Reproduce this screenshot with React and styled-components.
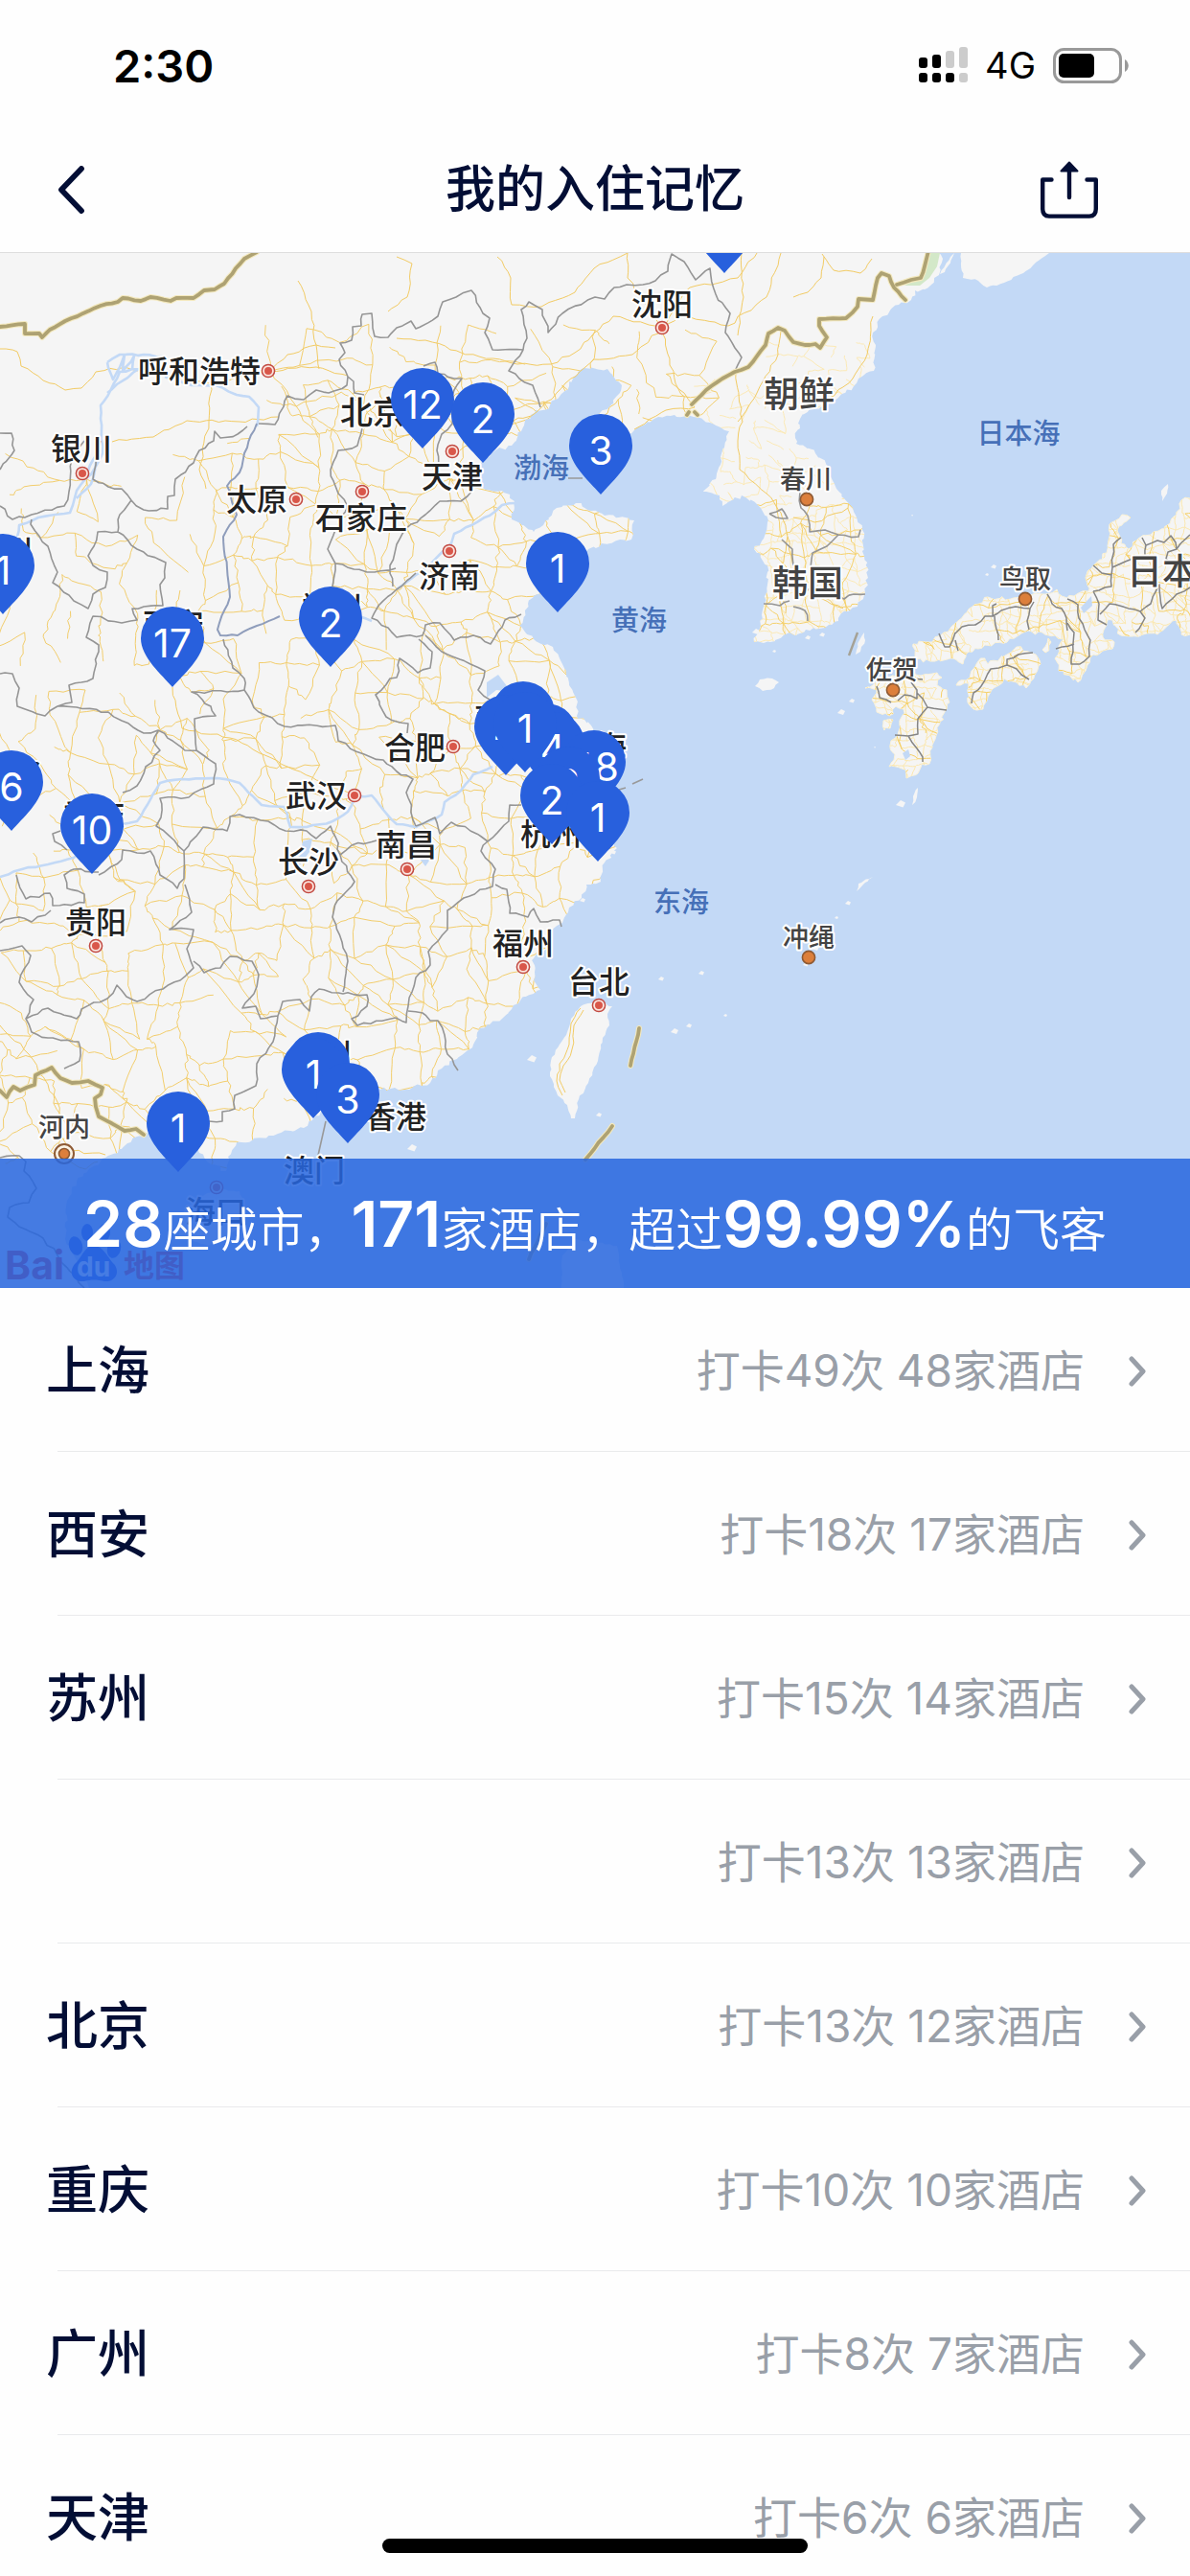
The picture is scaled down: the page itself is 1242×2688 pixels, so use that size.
import React from "react";
import styled, { createGlobalStyle } from "styled-components";

const cities = [
  { name: "上海", visits: 49, hotels: 48 },
  { name: "西安", visits: 18, hotels: 17 },
  { name: "苏州", visits: 15, hotels: 14 },
  { name: "", visits: 13, hotels: 13 },
  { name: "北京", visits: 13, hotels: 12 },
  { name: "重庆", visits: 10, hotels: 10 },
  { name: "广州", visits: 8, hotels: 7 },
  { name: "天津", visits: 6, hotels: 6 },
];

// later pins cover earlier ones, x/y is the tip
const pins = [
  { x: 756, y: 285, count: 1 },
  { x: 441, y: 468, count: 12 },
  { x: 504, y: 483, count: 2 },
  { x: 627, y: 516, count: 3 },
  { x: 582, y: 639, count: 1 },
  { x: 3, y: 641, count: 1 },
  { x: 345, y: 696, count: 2 },
  { x: 180, y: 717, count: 17 },
  { x: 12, y: 867, count: 6 },
  { x: 96, y: 912, count: 10 },
  { x: 546, y: 795, count: 1 },
  { x: 570, y: 818, count: 1 },
  { x: 528, y: 809, count: 4 },
  { x: 577, y: 827, count: 4 },
  { x: 548, y: 806, count: 1 },
  { x: 620, y: 846, count: 48 },
  { x: 593, y: 863, count: 2 },
  { x: 576, y: 881, count: 2 },
  { x: 624, y: 899, count: 1 },
  { x: 332, y: 1161, count: 1 },
  { x: 327, y: 1167, count: 1 },
  { x: 363, y: 1193, count: 3 },
  { x: 186, y: 1223, count: 1 },
];

const labels = [
  ["呼和浩特", 208, 387, "city"],
  ["银川", 85, 468, "city"],
  ["太原", 268, 521, "city"],
  ["石家庄", 377, 540, "city"],
  ["北京", 389, 430, "capital"],
  ["沈阳", 691, 317, "city"],
  ["天津", 472, 497, "city"],
  ["济南", 469, 601, "city"],
  ["西安", 181, 651, "city"],
  ["郑州", 346, 634, "city"],
  ["兰州", 2, 575, "city"],
  ["合肥", 433, 780, "city"],
  ["武汉", 330, 830, "city"],
  ["长沙", 322, 899, "city"],
  ["南昌", 424, 881, "city"],
  ["贵阳", 100, 962, "city"],
  ["成都", 10, 808, "city"],
  ["重庆", 98, 850, "city"],
  ["南京", 527, 749, "city"],
  ["上海", 622, 779, "city"],
  ["杭州", 575, 870, "city"],
  ["福州", 546, 984, "city"],
  ["台北", 625, 1024, "city"],
  ["广州", 335, 1100, "city"],
  ["香港", 413, 1165, "city"],
  ["澳门", 328, 1221, "city"],
  ["海口", 225, 1264, "city"],
  ["河内", 67, 1176, "town"],
  ["春川", 841, 500, "town"],
  ["鸟取", 1070, 604, "town"],
  ["佐贺", 931, 699, "town"],
  ["冲绳", 844, 978, "town"],
  ["朝鲜", 834, 411, "country"],
  ["韩国", 843, 608, "country"],
  ["日本", 1213, 596, "country"],
  ["渤海", 565, 488, "sea"],
  ["黄海", 667, 647, "sea"],
  ["东海", 711, 941, "sea"],
  ["日本海", 1063, 452, "sea"],
];

const redDots =
  "280,387 86,494 309,521 378,513 691,342 472,471 469,575 473,779 370,830 322,925 425,907 100,987 546,1009 625,1049 226,1239";
const orangeDots = "842,521 1070,625 932,720 844,999";

const mainland =
  "-20,240 975,240 980,264 984,270 980,287 965,302 955,303 951,313 938,318 921,330 911,347 914,360 912,387 896,395 891,403 875,415 861,423 845,427 835,437 835,447 830,457 831,463 851,473 865,487 873,510 890,530 900,553 902,580 906,603 903,620 895,633 878,640 875,648 861,655 841,657 831,663 824,660 804,670 787,670 794,653 797,633 801,610 801,590 787,573 797,562 802,543 791,527 774,517 754,528 751,517 734,513 747,500 752,477 761,450 744,442 724,435 704,433 687,435 661,450 647,460 627,482 614,470 612,440 634,427 647,410 649,402 634,385 607,385 594,403 574,423 554,433 544,450 534,465 517,470 504,480 497,495 504,509 524,512 537,523 534,542 557,555 567,548 581,530 601,525 617,533 631,538 662,543 659,563 647,563 614,573 590,595 561,620 551,630 542,653 557,667 577,675 587,693 594,715 602,730 602,747 617,757 625,775 612,800 640,815 645,830 634,873 644,885 631,900 627,920 612,923 607,937 594,947 587,963 574,973 571,990 557,1000 557,1023 564,1033 547,1040 534,1053 524,1063 501,1073 494,1090 477,1105 457,1117 449,1130 424,1137 412,1135 397,1137 375,1140 350,1165 335,1160 317,1177 290,1183 263,1190 247,1192 238,1207 236,1222 217,1213 208,1203 205,1185 180,1190 152,1182 133,1193 123,1203 110,1208 80,1233 70,1253 68,1293 80,1315 100,1360 -20,1360";

const islands = [
  "606,1050 621,1045 639,1050 634,1058 636,1070 629,1083 624,1107 614,1130 604,1147 600,1167 596,1167 592,1153 582,1143 574,1123 576,1103 591,1080 596,1063",
  "1003,250 1003,264 1005,290 1021,293 1030,300 1048,295 1068,285 1078,277 1095,264 1095,250",
  "213,1247 227,1240 250,1243 255,1253 247,1283 217,1300 187,1290 187,1267",
  "587,1310 600,1293 644,1300 651,1344 651,1360 585,1360",
  "1219,505 1218,515 1213,523 1212,512",
  "902,660 897,668 893,683 898,680 903,668",
  "958,822 957,832 952,840 953,831",
  "911,915 903,921 894,930 896,922",
  "788,716 793,709 806,708 813,712 808,718 796,721",
  "992,268 996,264 986,284 981,286",
];

const japan = [
  "1260,515 1242,520 1233,522 1228,537 1215,552 1188,562 1178,573 1170,567 1166,553 1180,540 1171,537 1158,547 1158,560 1155,577 1141,590 1133,603 1136,617 1121,622 1111,623 1103,615 1091,620 1078,620 1055,625 1031,623 1015,633 1001,647 985,660 968,670 953,672 955,688 971,690 995,687 1005,693 1011,680 1028,673 1051,670 1068,660 1088,660 1101,663 1110,667 1101,687 1105,700 1125,712 1133,700 1141,683 1161,677 1163,670 1151,665 1155,650 1161,647 1170,663 1208,662 1228,647 1233,662 1260,660",
  "1008,710 1021,690 1028,687 1031,693 1051,683 1061,675 1081,683 1086,693 1071,718 1061,712 1048,708 1035,720 1026,740 1016,740 1010,733 1011,713 998,715",
  "928,707 955,703 961,705 978,702 983,707 978,715 988,720 991,733 988,740 981,753 973,780 970,797 961,797 958,807 946,812 945,803 928,800 933,793 930,773 938,763 943,740 935,737 928,747 915,743 910,730 915,720 903,718 911,715",
  "1088,678 1094,666 1097,670 1091,681",
  "922,752 932,751 929,760 923,762",
];

const islets = [
  [690, 1022, 3],
  [732, 1016, 3],
  [704, 1077, 4],
  [719, 1071, 3],
  [757, 1060, 2],
  [555, 1106, 5],
  [625, 1164, 3],
  [430, 1199, 5],
  [952, 538, 1],
  [1037, 592, 3],
  [1030, 600, 2],
  [940, 840, 5],
  [878, 744, 4],
  [889, 732, 3],
  [885, 943, 3],
  [873, 958, 2],
  [851, 990, 4],
  [841, 1007, 3],
  [789, 660, 4],
  [808, 680, 2],
  [843, 666, 3],
  [858, 663, 3],
  [608, 940, 3],
  [640, 890, 3],
  [913, 780, 1],
];

const provinces = [
  "380,412 370,410 369,398 363,393 354,375 360,368 355,358 367,355 368,341 377,340 378,328 388,327 391,351 405,352 414,342 429,335 434,343 457,330 462,315 476,310 492,303 504,327 511,332 506,347 514,365 546,365 550,353 544,323 552,315 566,323 572,347 587,327 621,310 631,312 641,300 654,297 671,297 684,293 697,283 701,265 714,273 726,292 741,280 747,307 762,327 757,347 767,363 774,373 768,385",
  "546,365 531,387 542,395 556,402 564,425",
  "363,393 362,402 343,410 330,407 317,417 300,413 287,443 270,442",
  "258,445 248,453 230,457 224,450 223,460 208,470 202,483 183,500 182,517 175,518 175,531 150,532 137,522 127,510 113,508 97,500 100,485 105,460",
  "137,522 125,537 123,555 102,555 98,570 92,580 97,590 112,597 110,613 97,620 92,635 77,627 55,608 60,597 50,570 32,547 33,542",
  "123,555 143,573 173,587 172,603 167,610 170,632 138,635 143,647 127,650 97,643 90,665 103,673 97,708 72,715 75,733 60,737 47,747 18,737 20,718 13,703 0,703",
  "0,528 13,542 33,537 67,528 72,513 75,480 88,460",
  "0,452 12,452 15,470 0,490",
  "378,447 373,465 353,470 345,490 350,507 362,527 350,553 342,573 350,588 347,612",
  "350,588 383,597 413,593",
  "492,513 481,523 459,523 444,537 429,547 414,568 407,590 410,612",
  "434,598 414,615 395,632 388,645 405,655 414,665 441,663 444,652 459,650 474,668 494,663 512,672 527,647 544,641",
  "444,663 461,680 491,693 506,700 499,720 511,730",
  "437,667 451,680 449,697 436,702 417,687 414,707 407,708 392,725 403,748 414,753 426,755 425,765",
  "233,667 243,697 255,708 255,720 270,743 297,758 350,757 353,773 380,787 400,793 414,805 431,813 424,827 434,862",
  "255,720 237,722 200,722 220,737 225,747 203,750 205,783 225,797 223,818 197,832 167,833 168,853 163,862 182,877 192,888 212,863 237,867 240,852 250,850 280,857 298,867 320,867 330,875 345,862 350,873 355,892 370,920 352,940 347,957 357,983 363,1003 358,1035",
  "60,737 80,738 113,743 127,752 150,765 165,762 193,783 205,783",
  "165,763 160,773 167,783 152,800 143,820 128,827",
  "63,867 55,870 57,878 70,887",
  "103,910 77,907 67,913 70,927 88,933 88,942 55,945 52,932 27,938 17,913",
  "103,913 127,897 128,887 143,890 157,888 167,913 185,927 192,917 192,888",
  "193,923 200,952 177,970 202,970 195,990 202,1010 188,1023 170,1032 143,1045 132,1040 122,1028 112,1042 85,1053 80,1063 50,1052 27,1063 33,1077 50,1083 82,1087 83,1107 67,1115",
  "27,1063 35,1043 20,1025 32,997 23,987 0,992",
  "53,950 33,962 20,957 0,963",
  "202,1003 213,1015 230,1010 240,998 263,1003 270,1017 265,1037 253,1052 267,1050 272,1063 290,1060 295,1045 313,1043 323,1055 325,1040 333,1032 358,1037 383,1038 383,1050 367,1063 373,1070 413,1062 424,1067 426,1050 434,1020 449,1007 447,993 467,970 467,950 484,937 514,925 517,907 502,888 509,878 491,867 471,858 459,870 454,853 434,862",
  "517,923 529,928 532,953 551,957 557,948 564,962 584,960 586,967",
  "509,878 531,857 532,840 544,840",
  "426,1055 441,1057 449,1065 457,1065 464,1080 467,1100 478,1117",
  "290,1060 285,1087 268,1110 267,1133 245,1143 245,1157 232,1160 232,1170 218,1170",
  "355,892 367,882 393,877",
  "442,382 454,378 457,390 474,395 482,395 474,407 472,442 461,453 456,470 457,490",
  "835,513 836,530 843,538 845,555 861,553 875,558 896,560 898,553",
  "875,558 863,570 848,577 846,593 848,613 832,620",
  "848,613 865,618 881,625 891,620 903,620",
  "803,536 816,531 822,541 810,540 803,536",
  "816,563 827,573 828,590",
  "828,633 840,637 843,648",
  "797,630 814,632 824,627",
  "0,1208 20,1206 27,1212 25,1222 38,1240 30,1255 10,1260 8,1270 20,1280 45,1292 60,1310 88,1344",
];

const prefectures = [
  "1170,561 1162,568 1161,592",
  "1141,590 1150,598 1160,600 1161,592 1170,588 1182,583",
  "1192,561 1196,569 1195,580 1187,584",
  "1196,569 1208,564 1215,566 1222,559 1227,566 1228,573 1242,558",
  "1228,573 1219,576 1217,583 1228,590 1242,600",
  "1160,600 1160,612 1147,616 1141,617",
  "1141,617 1147,630 1146,647 1155,652",
  "1148,641 1158,630 1172,633 1190,638 1201,630 1210,610 1213,635 1228,620 1242,613",
  "1190,638 1195,645 1185,660",
  "997,661 1004,654 1018,652 1028,643 1036,643 1036,632 1040,630",
  "1036,643 1045,637 1060,633 1075,635 1079,628",
  "1038,643 1042,668",
  "1075,635 1072,648 1074,657",
  "1093,620 1098,630 1108,635 1113,645 1114,658",
  "1114,625 1125,631 1126,645 1132,657 1138,668 1137,685 1127,693 1118,693 1120,680 1121,660 1114,650",
  "980,661 986,675 991,675 997,660",
  "997,668 1000,679",
  "1102,677 1121,672",
  "1014,734 1016,723 1024,716 1034,698 1051,694 1051,688 1063,683 1078,681",
  "1051,694 1061,698 1066,704 1074,709",
  "915,716 918,728 930,733",
  "937,731 944,725 957,729 957,720 951,712",
  "957,723 963,729 968,738 958,750 958,766 948,768 934,767",
  "968,738 980,740 988,741",
  "948,768 957,781 963,790 963,795",
  "952,708 963,709",
];

const borders = [
  "0,341 26,338 26,348 41,348 44,352 52,344 68,335 105,319 123,315 128,311 147,314 157,310 178,314 184,311 202,311 213,303 224,302 234,296 246,280 255,270 268,263",
  "722,422 737,407 754,395 767,388 781,383 789,373 799,360 802,348 812,342 819,345 828,357 840,360 851,359 856,363 863,352 855,340 855,333 883,332 895,320 896,312 911,313 916,290 920,285 928,288 933,300 945,313",
  "936,297 951,292 961,290 965,278 969,262",
  "0,1138 7,1145 14,1134 21,1138 36,1132 37,1122 54,1114 63,1125 75,1130 92,1128 107,1135 105,1142 99,1146 100,1155 103,1165 130,1180 142,1178 150,1184",
  "667,1073 658,1112",
  "639,1175 611,1210",
  "570,1277 552,1314",
  "717,433 719,430",
  "725,430 728,433",
];

const rivers = [
  "0,915 23,907 50,902 77,895 96,880 128,860 143,857 167,817 190,813 227,812 250,817 273,840 297,842 303,863 320,863 347,857 363,847 370,832 388,830 400,845 414,860 434,863 461,850 464,837 481,825 494,808 514,800",
  "18,560 20,548 40,540 73,535 80,512 95,495 107,473 105,423 115,408 125,388 145,385",
  "112,378 125,370 150,370 170,372 145,385 112,410",
  "112,378 118,396 130,370 128,388 140,371 138,386",
  "172,393 200,402 225,402 247,412 260,414 270,425 268,445",
  "537,525 524,527 511,538 474,557 471,567 451,587 434,600 414,615",
  "88,500 97,480 103,470 95,505 80,520",
  "388,648 370,640 354,650",
];

const borderRiver =
  "268,442 255,473 250,493 237,507 247,537 233,560 237,593 240,623 227,657 230,663 248,663 268,653 292,643";

const highways = [
  "0,364 18,367 22,382 45,397 68,407 85,405 100,388 130,383 220,400 280,387 330,383 363,392",
  "311,293 325,325 330,360 333,385",
  "280,387 300,370 330,360 350,363",
  "117,461 160,456 195,439 250,440 290,435",
  "220,400 218,440 208,490 215,510",
  "414,353 444,355 470,365 500,372 540,380 575,380 600,368 640,330 691,342",
  "414,268 430,275 425,310 405,325",
  "519,268 533,290 534,318 565,320 600,305 620,280 655,264",
  "691,342 660,370 620,375 590,400 560,430 520,445 480,470",
  "691,342 715,330 760,340 800,310 815,264",
  "691,342 705,400 725,425 695,428 662,448",
  "655,264 655,290 691,342",
  "691,342 720,300 770,290 790,264",
  "774,264 776,310 770,350",
  "768,388 775,440 770,460 772,490 800,515 815,535 822,560",
  "815,345 812,370 790,410 770,440",
  "911,330 905,370 890,395 860,420",
  "828,540 850,545 885,530",
  "822,560 830,600 850,620 880,635",
  "822,560 815,600 820,640",
  "606,1052 596,1068 594,1090 584,1110 581,1128 587,1143",
  "609,1054 599,1070 597,1095 588,1112 584,1127 590,1140",
  "860,268 857,290 843,305 828,310",
  "910,270 898,285 870,282 858,265",
  "180,717 190,760 240,770 300,800 370,830",
  "0,1070 30,1100 60,1150 68,1200 110,1205",
];

const sketch = (seed) => {
  let s = seed;
  return () => {
    s = (s * 16807) % 2147483647;
    return s / 2147483647;
  };
};

const parse = (str) => str.split(" ").map((p) => p.split(",").map(Number));

// splits every segment and nudges the new points, for a natural coast line
const rough = (str, amp, closed, step = 7) => {
  const pts = parse(str);
  const rand = sketch(pts.length * 911 + Math.abs(pts[0][0]) + 7);
  const out = [];
  const end = closed ? pts.length : pts.length - 1;
  for (let i = 0; i < end; i++) {
    const [x1, y1] = pts[i];
    const [x2, y2] = pts[(i + 1) % pts.length];
    const n = Math.max(1, Math.round(Math.hypot(x2 - x1, y2 - y1) / step));
    for (let k = 0; k < n; k++) {
      const j = k === 0 ? 0 : amp;
      out.push([
        x1 + ((x2 - x1) * k) / n + (rand() - 0.5) * j,
        y1 + ((y2 - y1) * k) / n + (rand() - 0.5) * j,
      ]);
    }
  }
  if (!closed) out.push(pts[pts.length - 1]);
  return (
    "M" +
    out.map(([x, y]) => `${x.toFixed(1)} ${y.toFixed(1)}`).join("L") +
    (closed ? "Z" : "")
  );
};

const roadMesh = (x0, y0, x1, y1, gap, seed, chance) => {
  const rand = sketch(seed);
  const cols = Math.ceil((x1 - x0) / gap);
  const rows = Math.ceil((y1 - y0) / gap);
  const node = [];
  for (let r = 0; r <= rows; r++) {
    node.push([]);
    for (let c = 0; c <= cols; c++) {
      node[r].push([
        x0 + (c + (rand() - 0.5) * 0.8) * gap,
        y0 + (r + (rand() - 0.5) * 0.8) * gap,
      ]);
    }
  }
  let d = "";
  const link = (a, b) => {
    if (!b || rand() > chance(a[0], a[1])) return;
    d += `M${a[0].toFixed(1)} ${a[1].toFixed(1)}`;
    for (let k = 1; k < 5; k++) {
      const x = a[0] + ((b[0] - a[0]) * k) / 5 + (rand() - 0.5) * gap * 0.14;
      const y = a[1] + ((b[1] - a[1]) * k) / 5 + (rand() - 0.5) * gap * 0.14;
      d += `L${x.toFixed(1)} ${y.toFixed(1)}`;
    }
    d += `L${b[0].toFixed(1)} ${b[1].toFixed(1)}`;
  };
  for (let r = 0; r <= rows; r++) {
    for (let c = 0; c <= cols; c++) {
      link(node[r][c], node[r][c + 1]);
      link(node[r][c], node[r + 1] && node[r + 1][c]);
      if (rand() > 0.7) link(node[r][c], node[r + 1] && node[r + 1][c + 1]);
    }
  }
  return d;
};

const chinaRoads = roadMesh(0, 400, 660, 1200, 27, 77, (x, y) => {
  if (y < 460 && x < 290) return 0;
  if (x < 210 && y < 740) return 0.38;
  if (x < 60 && y < 900) return 0.4;
  return x > 330 ? 0.84 : 0.7;
});
const northRoads = roadMesh(290, 350, 720, 440, 32, 31, () => 0.6);
const koreaRoads = roadMesh(725, 360, 930, 670, 13, 5, (x, y) => {
  if (y < 400 && x < 790) return 0;
  return y > 530 ? 0.8 : 0.35;
});
const koreaHighways = roadMesh(790, 530, 910, 670, 24, 11, () => 0.75);
const japanRoads = roadMesh(895, 510, 1242, 820, 10, 19, () => 0.75);
const japanHighways = roadMesh(895, 510, 1242, 820, 24, 23, () => 0.65);

const mainlandPath = rough(mainland, 4, true, 4);
const islandPath = islands.map((p) => rough(p, 2, true, 4)).join("");
const japanPath = japan.map((p) => rough(p, 4, true, 4)).join("");
const joined = (list, amp) => list.map((p) => rough(p, amp, false)).join("");

const labelStyle = {
  city: { size: 32, weight: 500, fill: "#222" },
  capital: { size: 34, weight: 500, fill: "#222" },
  town: { size: 27, weight: 500, fill: "#444" },
  country: { size: 37, weight: 500, fill: "#444" },
  sea: { size: 29, weight: 500, fill: "#4670b8" },
};

const MapDrawing = () => (
  <MapSvg viewBox="0 264 1242 1080" role="img" aria-label="入住城市地图">
    <defs>
      <clipPath id="land">
        <path d={mainlandPath} />
      </clipPath>
      <clipPath id="japan">
        <path d={japanPath} />
      </clipPath>
    </defs>
    <rect x="0" y="264" width="1242" height="1080" fill="#c3d9f6" />
    <g fill="#f5f5f5">
      <path d={mainlandPath} />
      <path d={islandPath} />
      <path d={japanPath} stroke="#fbf3da" />
      {islets.map(([x, y, r]) => (
        <path key={`${x}-${y}`} d={`M${x - r} ${y}l${r} ${-r}l${r} ${r / 2}l${-r / 2} ${r}z`} />
      ))}
    </g>
    <path
      d="M969 264L981 264L978 278L970 290L960 298L944 298L955 292L964 288Z"
      fill="#d3e8c8"
    />
    <g clipPath="url(#land)" fill="none">
      <path d={koreaRoads} stroke="#fbe9b6" />
      <path d={koreaHighways} stroke="#f4d06c" />
      <path d={chinaRoads} stroke="#f2cd6c" />
      <path d={northRoads} stroke="#f2cd6c" />
    </g>
    <path d={joined(highways, 3)} fill="none" stroke="#f2cb64" />
    <g clipPath="url(#japan)" fill="none">
      <path d={japanRoads} stroke="#fbe7ae" />
      <path d={japanHighways} stroke="#f5cf66" />
    </g>
    <path d="M1139 622l1 10l-9 8l-3 -6z" fill="#c3d9f6" />
    <g fill="#c3d9f6">
      <path d="M508 712l12 -8l6 8l8 10l-16 -2l-10 8z" />
      <path d="M316 878l10 -3l-3 14l-12 16l-12 -6l14 -6z" />
      <path d="M438 896l12 -1l-6 9z" />
      <path d="M942 786l6 -4l2 7l-5 4z" />
    </g>
    <g fill="none" strokeLinejoin="round">
      <path d={joined(rivers, 2)} stroke="#c3d9f6" strokeWidth="2.6" />
      <path d={joined(provinces, 3)} stroke="#959595" strokeWidth="1.6" />
      <path d={joined(prefectures, 2)} stroke="#858585" strokeWidth="1.5" />
      <path d={rough(borderRiver, 2, false)} stroke="#8f9dbb" strokeWidth="2" />
      <path
        d="M340 1170L331 1210M646 824L653 822M660 818L671 813M593 499H608"
        stroke="#999"
        strokeWidth="1.6"
      />
      <path d="M895 660L886 684" stroke="#a5a195" strokeWidth="2.4" />
    </g>
    <g fill="none" strokeLinecap="round" strokeLinejoin="round">
      <path d={joined(borders, 1)} stroke="#f3e8bd" strokeWidth="6" />
      <path d={joined(borders, 1)} stroke="#aea273" strokeWidth="3.8" />
    </g>
    {parse(redDots).map(([x, y]) => (
      <g key={`${x}-${y}`}>
        <circle cx={x} cy={y} r="6.6" fill="#fbe6e0" stroke="#c24a42" strokeWidth="1.5" />
        <circle cx={x} cy={y} r="4" fill="#d9574a" />
      </g>
    ))}
    {parse(orangeDots).map(([x, y]) => (
      <circle key={x} cx={x} cy={y} r="6.6" fill="#dc7f3c" stroke="#8e5a34" strokeWidth="1.6" />
    ))}
    <circle cx="67" cy="1204" r="10" fill="#fbf3e4" stroke="#8e5a34" strokeWidth="2" />
    <circle cx="67" cy="1204" r="5.5" fill="#dc7f3c" stroke="#8e5a34" strokeWidth="1.6" />
    {labels.map(([text, x, y, kind]) => (
      <MapLabel key={text} x={x} y={y} $kind={kind}>
        {text}
      </MapLabel>
    ))}
    <g fill="#2a55e0">
      <ellipse cx="79" cy="1300" rx="7" ry="10" transform="rotate(-15 79 1300)" />
      <ellipse cx="91" cy="1286" rx="6" ry="9" />
      <ellipse cx="109" cy="1286" rx="6" ry="9" />
      <ellipse cx="119" cy="1303" rx="7" ry="10" transform="rotate(15 119 1303)" />
      <path d="M98 1300C108 1300 112 1312 119 1319C126 1328 120 1338 109 1337C101 1335 95 1335 88 1337C76 1338 71 1328 78 1319C86 1312 88 1300 98 1300Z" />
    </g>
    <Watermark x="5" y="1335" $size={41}>
      Bai
    </Watermark>
    <Watermark x="80" y="1332" $size={28} $light>
      du
    </Watermark>
    <Watermark x="129" y="1332" $size={32}>
      地图
    </Watermark>
  </MapSvg>
);

const Pin = ({ x, y, count }) => (
  <g transform={`translate(${x} ${y})`}>
    <path
      d="M0 0C-11 -13 -33 -31 -33 -51A33 33 0 0 1 33 -51C33 -31 11 -13 0 0Z"
      fill="#2860dd"
    />
    <PinCount x="0" y="-31">
      {count}
    </PinCount>
  </g>
);

const SignalIcon = () => (
  <svg width="51" height="38" viewBox="0 0 51 38" aria-hidden="true">
    <rect x="0" y="11" width="9" height="11" rx="3" />
    <rect x="14" y="8" width="9" height="14" rx="3" />
    <rect x="28" y="4" width="9" height="18" rx="3" fill="#ccc" />
    <rect x="42" y="0" width="9" height="22" rx="3" fill="#ccc" />
    <rect x="0" y="27" width="9" height="10" rx="3" />
    <rect x="14" y="27" width="9" height="10" rx="3" />
    <rect x="28" y="27" width="9" height="10" rx="3" />
    <rect x="42" y="27" width="9" height="10" rx="3" fill="#ccc" />
  </svg>
);

const BatteryIcon = () => (
  <svg width="79" height="37" viewBox="0 0 79 37" aria-hidden="true">
    <rect
      x="1.5"
      y="1.5"
      width="69"
      height="34"
      rx="10"
      fill="none"
      stroke="#999"
      strokeWidth="3"
    />
    <rect x="6" y="6" width="37" height="25" rx="5" />
    <path d="M75 12C80 15 80 22 75 25Z" fill="#999" />
  </svg>
);

const App = () => {
  return (
    <Screen>
      <GlobalStyle />
      <StatusBar>
        <Clock>2:30</Clock>
        <StatusIcons>
          <SignalIcon />
          <Network>4G</Network>
          <BatteryIcon />
        </StatusIcons>
      </StatusBar>

      <NavBar>
        <IconButton aria-label="返回">
          <svg width="28" height="50" viewBox="0 0 28 50">
            <path d="M25 3L4 25L25 47" strokeWidth="5.8" />
          </svg>
        </IconButton>
        <Title>我的入住记忆</Title>
        <IconButton aria-label="分享" $end>
          <svg width="60" height="60" viewBox="0 0 60 60">
            <path
              d="M11.5 19.5H2.2V50Q2.2 57.6 9 57.6H51Q57.8 57.6 57.8 50V19.5H48.5M30 10V38"
              strokeWidth="4.4"
            />
            <path d="M30 1.5L38.5 10.5H21.5Z" strokeWidth="2" fill="#030e35" />
          </svg>
        </IconButton>
      </NavBar>

      <MapSection>
        <MapDrawing />
        <Summary>
          <strong>28</strong>座城市，<strong>171</strong>家酒店，超过
          <strong>99.99%</strong>的飞客
        </Summary>
        <PinLayer viewBox="0 264 1242 1080">
          {pins.map((pin) => (
            <Pin key={`${pin.x}-${pin.y}`} {...pin} />
          ))}
        </PinLayer>
      </MapSection>

      <CityList>
        {cities.map((city, i) => (
          <CityItem key={i}>
            <CityLink href="#">
              <CityName>{city.name}</CityName>
              <CityStat>
                打卡{city.visits}次 {city.hotels}家酒店
              </CityStat>
              <svg width="18" height="32" viewBox="0 0 18 32" aria-hidden="true">
                <path d="M3 3L15 16L3 29" />
              </svg>
            </CityLink>
          </CityItem>
        ))}
      </CityList>
      <HomeIndicator />
    </Screen>
  );
};

const GlobalStyle = createGlobalStyle`
  * {
    box-sizing: border-box;
  }

  body {
    margin: 0;
    background-color: #fefefe;
    font-family: Inter, "Noto Sans CJK SC", sans-serif;
    color: #030e35;
  }
`;

const Screen = styled.div`
  display: flex;
  flex-direction: column;
  height: 100vh;
  overflow: hidden;
`;

const StatusBar = styled.div`
  display: flex;
  flex-shrink: 0;
  align-items: center;
  justify-content: space-between;
  height: 132px;
  padding: 4px 64px 0 118px;
  color: #000;
`;

const Clock = styled.span`
  font-size: 47px;
  font-weight: 600;
`;

const StatusIcons = styled.div`
  display: flex;
  align-items: center;
  gap: 18px;
`;

const Network = styled.span`
  font-size: 38px;
  font-weight: 400;
`;

const NavBar = styled.header`
  display: grid;
  grid-template-columns: 1fr auto 1fr;
  flex-shrink: 0;
  align-items: center;
  height: 132px;
  padding: 0 96px 0 60px;
  border-bottom: 1px solid #dedede;
`;

const Title = styled.h1`
  margin: 0 0 0 36px;
  font-size: 52px;
  font-weight: 500;
  line-height: 72px;
`;

const IconButton = styled.button`
  display: flex;
  justify-self: ${(props) => (props.$end ? "end" : "start")};
  padding: 0;
  border: none;
  background: none;
  cursor: pointer;

  svg {
    fill: none;
    stroke: #030e35;
    stroke-linecap: round;
    stroke-linejoin: round;
  }
`;

const MapSection = styled.section`
  position: relative;
  flex-shrink: 0;
  overflow: hidden;
`;

const MapSvg = styled.svg`
  display: block;
  width: 100%;
  height: auto;
`;

const MapLabel = styled.text`
  fill: ${(props) => labelStyle[props.$kind].fill};
  stroke: ${(props) => (props.$kind === "sea" ? "none" : "#fff")};
  stroke-width: 4px;
  stroke-linejoin: round;
  paint-order: stroke;
  font-size: ${(props) => labelStyle[props.$kind].size}px;
  font-weight: ${(props) => labelStyle[props.$kind].weight};
  text-anchor: middle;
  dominant-baseline: central;
`;

const Watermark = styled.text`
  fill: ${(props) => (props.$light ? "#fff" : "#d8303c")};
  font-size: ${(props) => props.$size}px;
  font-weight: 700;
`;

const PinLayer = styled.svg`
  position: absolute;
  inset: 0;
  width: 100%;
  height: 100%;
  pointer-events: none;
`;

const PinCount = styled.text`
  fill: #fff;
  font-size: 41px;
  text-anchor: middle;
`;

const Summary = styled.p`
  position: absolute;
  right: 0;
  bottom: 0;
  left: 0;
  margin: 0;
  padding-top: 15px;
  background-color: rgba(40, 103, 222, 0.86);
  color: #fff;
  font-size: 49px;
  font-weight: 350;
  line-height: 120px;
  text-align: center;
  white-space: nowrap;

  strong {
    font-size: 66px;
    font-weight: 600;
    line-height: 1;
  }
`;

const CityList = styled.ul`
  flex: 1;
  min-height: 0;
  margin: 0;
  padding: 0;
  overflow: hidden;
  list-style: none;
`;

const CityItem = styled.li`
  &::after {
    content: "";
    display: block;
    height: 1px;
    margin-left: 60px;
    background-color: #e9eaec;
  }
`;

const CityLink = styled.a`
  display: flex;
  align-items: center;
  height: 170px;
  padding: 4px 46px 0 48px;
  color: inherit;
  text-decoration: none;

  svg {
    margin-left: 46px;
    fill: none;
    stroke: #999fa8;
    stroke-width: 5;
    stroke-linecap: round;
    stroke-linejoin: round;
  }
`;

const CityName = styled.span`
  flex: 1;
  margin-bottom: 10px;
  font-size: 54px;
  font-weight: 500;
`;

const CityStat = styled.span`
  margin-bottom: 8px;
  color: #999fa8;
  font-size: 46px;
  font-weight: 400;
`;

const HomeIndicator = styled.div`
  position: fixed;
  bottom: 24px;
  left: 50%;
  width: 444px;
  height: 15px;
  margin-left: -222px;
  border-radius: 8px;
  background-color: #000;
`;

export default App;
